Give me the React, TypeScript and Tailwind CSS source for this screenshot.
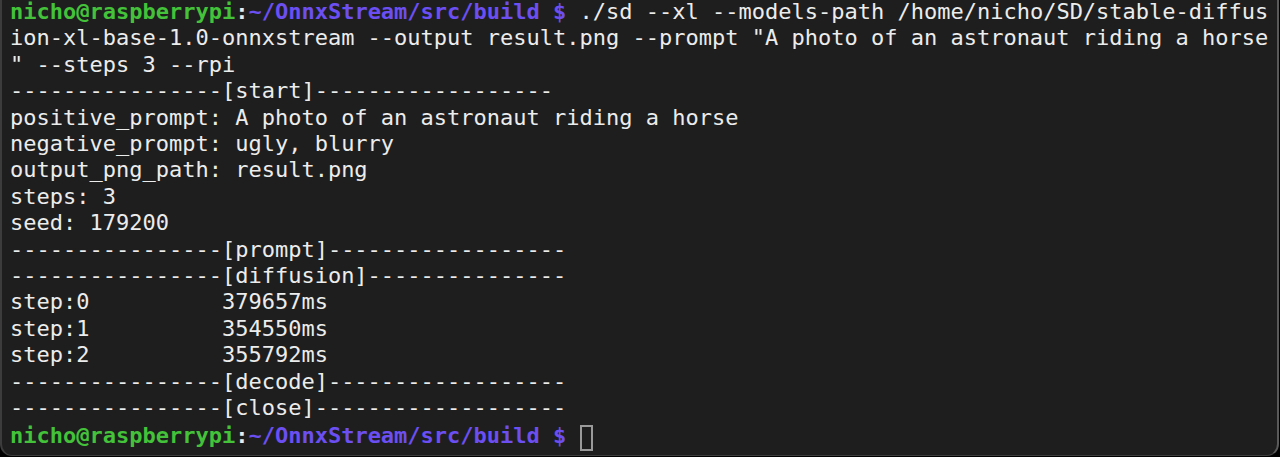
import React from "react";

const G = "text-[#43c23a] font-bold";
const P = "text-[#6c4ff2] font-bold";
const W = "text-[#ececec] font-bold";

function Prompt() {
  return (
    <>
      <span className={G}>nicho@raspberrypi</span>
      <span className={W}>:</span>
      <span className={P}>~/OnnxStream/src/build $</span>
    </>
  );
}

const dash = (n: number) => "-".repeat(n);

export default function App() {
  const plain = [
    'ion-xl-base-1.0-onnxstream --output result.png --prompt "A photo of an astronaut riding a horse',
    '" --steps 3 --rpi',
    dash(16) + "[start]" + dash(18),
    "positive_prompt: A photo of an astronaut riding a horse",
    "negative_prompt: ugly, blurry",
    "output_png_path: result.png",
    "steps: 3",
    "seed: 179200",
    dash(16) + "[prompt]" + dash(18),
    dash(16) + "[diffusion]" + dash(15),
    "step:0          379657ms",
    "step:1          354550ms",
    "step:2          355792ms",
    dash(16) + "[decode]" + dash(18),
    dash(16) + "[close]" + dash(19),
  ];
  return (
    <div className="w-[1280px] h-[457px] bg-black overflow-hidden">
      <div className="w-[1279px] h-[456px] bg-[#1e1e1e] border-l-2 border-r-2 border-b border-l-[#3c3c3c] border-r-[#5a5a5a] border-b-[#3c3c3c] rounded-b-[12px] overflow-hidden">
        <div
          className="pl-[8px] -mt-[1px] text-[22px] leading-[26.4px] text-[#ececec] whitespace-pre"
          style={{ fontFamily: '"DejaVu Sans Mono", "Liberation Mono", monospace' }}
        >
          <div>
            <Prompt />
            {" ./sd --xl --models-path /home/nicho/SD/stable-diffus"}
          </div>
          {plain.map((l, i) => (
            <div key={i}>{l}</div>
          ))}
          <div className="flex items-center">
            <Prompt />
            <span> </span>
            <span className="inline-block w-[13px] h-[26px] border-2 border-[#9a9a9a] mt-[3px]" />
          </div>
        </div>
      </div>
    </div>
  );
}
